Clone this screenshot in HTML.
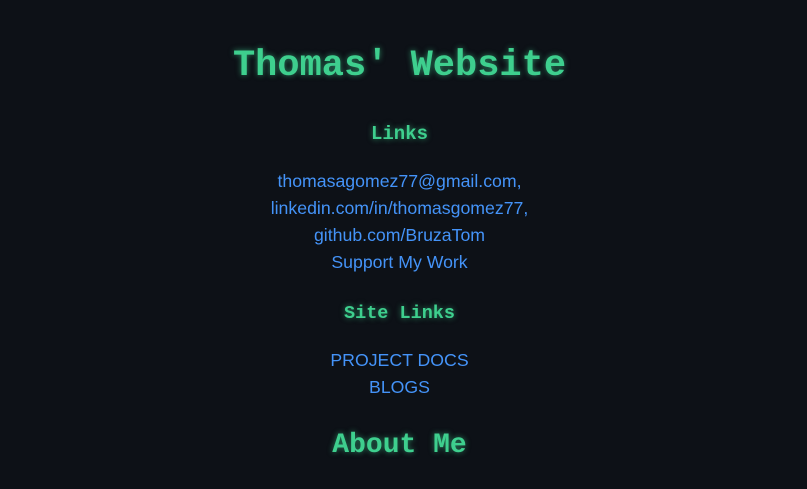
<!DOCTYPE html>
<html><head><style>
body{margin:0;background:#0d1117;width:807px;height:489px;overflow:hidden;position:relative}
.m{position:absolute;left:0;width:799px;text-align:center;font-family:"Liberation Mono",monospace;font-weight:bold;color:#3ecf8e;text-shadow:0 0 6px rgba(62,207,142,.6);margin:0}
.t{position:absolute;left:0;width:799px;text-align:center;font-family:"Liberation Sans",sans-serif;font-size:17.7px;color:#4493f8;line-height:27px}
</style></head><body>
<div class="m" style="top:44px;font-size:37px;line-height:44px">Thomas' Website</div>
<div class="m" style="top:122px;font-size:19px;line-height:24px">Links</div>
<div class="t" style="top:168px">thomasagomez77@gmail.com,<br>linkedin.com/in/thomasgomez77,<br>github.com/BruzaTom<br>Support My Work</div>
<div class="m" style="top:302px;font-size:18.5px;line-height:24px">Site Links</div>
<div class="t" style="top:347px">PROJECT DOCS<br>BLOGS</div>
<div class="m" style="top:428px;font-size:28px;line-height:36px">About Me</div>
</body></html>
